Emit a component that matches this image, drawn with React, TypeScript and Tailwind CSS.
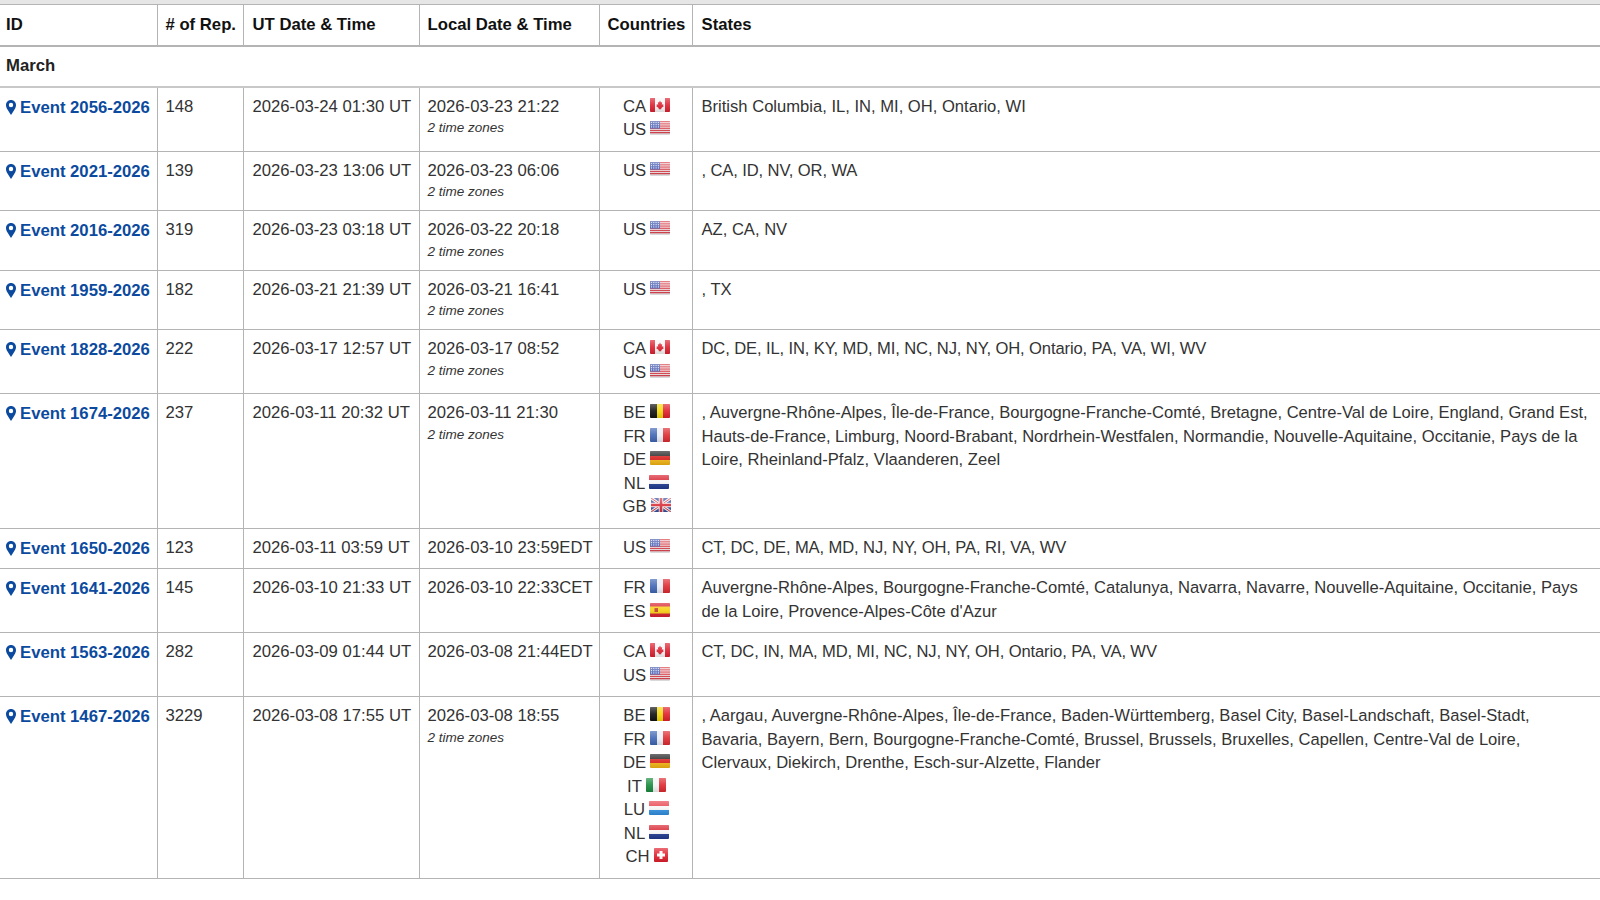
import React, { useId } from "react";

type Code = "CA" | "US" | "BE" | "FR" | "DE" | "NL" | "GB" | "IT" | "LU" | "CH" | "ES";

function Flag({ code }: { code: Code }) {
  const id = useId();
  const w = code === "CH" ? 14 : 20;
  let body: React.ReactNode = null;
  const v = (a: string, b: string, c: string) => (
    <>
      <rect x="0" y="0" width="7" height="14" fill={a} />
      <rect x="7" y="0" width="6" height="14" fill={b} />
      <rect x="13" y="0" width="7" height="14" fill={c} />
    </>
  );
  const h = (a: string, b: string, c: string) => (
    <>
      <rect x="0" y="0" width="20" height="5" fill={a} />
      <rect x="0" y="5" width="20" height="4" fill={b} />
      <rect x="0" y="9" width="20" height="5" fill={c} />
    </>
  );
  if (code === "BE") body = v("#111111", "#f5d90a", "#e0202c");
  if (code === "FR") body = v("#3f66b4", "#eceef6", "#dd2a30");
  if (code === "IT") body = v("#178a3c", "#f4f4f4", "#dd2a30");
  if (code === "DE") body = h("#222222", "#d8201c", "#f3b512");
  if (code === "NL") body = h("#d8202c", "#f6f6f6", "#1f3a8f");
  if (code === "LU") body = h("#e8404a", "#f6f6f6", "#2f8fe0");
  if (code === "CA")
    body = (
      <>
        <rect width="20" height="14" fill="#f6f6f6" />
        <rect width="5" height="14" fill="#dd2030" />
        <rect x="15" width="5" height="14" fill="#dd2030" />
        <path d="M10 2.5l1 2 1.2-.4-.4 2.6 1.6-.6-.4 1.4 1 .5-2.6 2-.2 1.2h-2.4l-.2-1.2-2.6-2 1-.5-.4-1.4 1.6.6-.4-2.6 1.2.4z" fill="#dd2030" />
      </>
    );
  if (code === "US")
    body = (
      <>
        <rect width="20" height="14" fill="#f4f4f6" />
        {[0, 2.2, 4.4, 6.6, 8.8, 11].map((y) => (
          <rect key={y} y={y} width="20" height="1.3" fill="#d8404a" />
        ))}
        <rect width="10" height="7.6" fill="#4a5fb0" />
        {[1.5, 3.7, 5.9].map((y) =>
          [1.5, 3.8, 6.1, 8.4].map((x) => <circle key={`${x}-${y}`} cx={x} cy={y} r="0.6" fill="#eef" />)
        )}
      </>
    );
  if (code === "GB")
    body = (
      <>
        <rect width="20" height="14" fill="#3a4f9f" />
        <path d="M0 0L20 14M20 0L0 14" stroke="#f4f4f4" strokeWidth="3" />
        <path d="M0 0L20 14M20 0L0 14" stroke="#d8303a" strokeWidth="1" />
        <path d="M10 0V14M0 7H20" stroke="#f4f4f4" strokeWidth="4.5" />
        <path d="M10 0V14M0 7H20" stroke="#d8303a" strokeWidth="2.6" />
      </>
    );
  if (code === "ES")
    body = (
      <>
        <rect width="20" height="14" fill="#d8202c" />
        <rect y="3.5" width="20" height="7" fill="#f7cf10" />
        <rect x="4.5" y="5" width="3.5" height="4" fill="#c0401c" />
      </>
    );
  if (code === "CH")
    body = (
      <>
        <rect width="14" height="14" fill="#e01e2c" />
        <rect x="5.5" y="3" width="3" height="8" fill="#fff" />
        <rect x="3" y="5.5" width="8" height="3" fill="#fff" />
      </>
    );
  return (
    <svg
      width={w}
      height="14"
      viewBox={`0 0 ${w} 14`}
      className="inline-block align-[0px] ml-[4px] rounded-[1px]"
    >
      <defs>
        <linearGradient id={id} x1="0" y1="0" x2="0" y2="1">
          <stop offset="0" stopColor="#fff" stopOpacity="0.35" />
          <stop offset="0.5" stopColor="#fff" stopOpacity="0.1" />
          <stop offset="1" stopColor="#000" stopOpacity="0.12" />
        </linearGradient>
      </defs>
      {body}
      <rect width={w} height="14" fill={`url(#${id})`} />
    </svg>
  );
}

function Pin() {
  return (
    <svg width="10" height="15" viewBox="0 0 10 15" className="inline-block mr-[4px] align-[-2px]">
      <path
        fillRule="evenodd"
        d="M5 0C2.2 0 0 2.2 0 5c0 1.5.6 3 1.5 4.6C2.5 11.5 3.8 13.4 5 15c1.2-1.6 2.5-3.5 3.5-5.4C9.4 8 10 6.5 10 5c0-2.8-2.2-5-5-5zm0 2.8a2.2 2.2 0 110 4.4 2.2 2.2 0 010-4.4z"
        fill="#0b4a9e"
      />
    </svg>
  );
}

type Row = {
  id: string;
  rep: string;
  ut: string;
  local: string;
  tz: boolean;
  c: Code[];
  s: string;
  tight?: boolean;
};

const rows: Row[] = [
  { id: "Event 2056-2026", rep: "148", ut: "2026-03-24 01:30 UT", local: "2026-03-23 21:22", tz: true, c: ["CA", "US"], s: "British Columbia, IL, IN, MI, OH, Ontario, WI" },
  { id: "Event 2021-2026", rep: "139", ut: "2026-03-23 13:06 UT", local: "2026-03-23 06:06", tz: true, c: ["US"], s: ", CA, ID, NV, OR, WA", tight: true },
  { id: "Event 2016-2026", rep: "319", ut: "2026-03-23 03:18 UT", local: "2026-03-22 20:18", tz: true, c: ["US"], s: "AZ, CA, NV" },
  { id: "Event 1959-2026", rep: "182", ut: "2026-03-21 21:39 UT", local: "2026-03-21 16:41", tz: true, c: ["US"], s: ", TX" },
  { id: "Event 1828-2026", rep: "222", ut: "2026-03-17 12:57 UT", local: "2026-03-17 08:52", tz: true, c: ["CA", "US"], s: "DC, DE, IL, IN, KY, MD, MI, NC, NJ, NY, OH, Ontario, PA, VA, WI, WV", tight: true },
  { id: "Event 1674-2026", rep: "237", ut: "2026-03-11 20:32 UT", local: "2026-03-11 21:30", tz: true, c: ["BE", "FR", "DE", "NL", "GB"], s: ", Auvergne-Rhône-Alpes, Île-de-France, Bourgogne-Franche-Comté, Bretagne, Centre-Val de Loire, England, Grand Est, Hauts-de-France, Limburg, Noord-Brabant, Nordrhein-Westfalen, Normandie, Nouvelle-Aquitaine, Occitanie, Pays de la Loire, Rheinland-Pfalz, Vlaanderen, Zeel" },
  { id: "Event 1650-2026", rep: "123", ut: "2026-03-11 03:59 UT", local: "2026-03-10 23:59EDT", tz: false, c: ["US"], s: "CT, DC, DE, MA, MD, NJ, NY, OH, PA, RI, VA, WV", tight: true },
  { id: "Event 1641-2026", rep: "145", ut: "2026-03-10 21:33 UT", local: "2026-03-10 22:33CET", tz: false, c: ["FR", "ES"], s: "Auvergne-Rhône-Alpes, Bourgogne-Franche-Comté, Catalunya, Navarra, Navarre, Nouvelle-Aquitaine, Occitanie, Pays de la Loire, Provence-Alpes-Côte d'Azur" },
  { id: "Event 1563-2026", rep: "282", ut: "2026-03-09 01:44 UT", local: "2026-03-08 21:44EDT", tz: false, c: ["CA", "US"], s: "CT, DC, IN, MA, MD, MI, NC, NJ, NY, OH, Ontario, PA, VA, WV", tight: true },
  { id: "Event 1467-2026", rep: "3229", ut: "2026-03-08 17:55 UT", local: "2026-03-08 18:55", tz: true, c: ["BE", "FR", "DE", "IT", "LU", "NL", "CH"], s: ", Aargau, Auvergne-Rhône-Alpes, Île-de-France, Baden-Württemberg, Basel City, Basel-Landschaft, Basel-Stadt, Bavaria, Bayern, Bern, Bourgogne-Franche-Comté, Brussel, Brussels, Bruxelles, Capellen, Centre-Val de Loire, Clervaux, Diekirch, Drenthe, Esch-sur-Alzette, Flander" },
];

const th = "border-l border-[#b4b4b4] px-2 py-0 text-left font-bold text-[#111] align-middle whitespace-nowrap";
const td = "border-l border-[#b4b4b4] px-2 pt-[7px] pb-[9px] align-top";

export default function App() {
  return (
    <div className="w-[1600px] h-[900px] bg-white overflow-hidden font-['Liberation_Sans',Arial,sans-serif] text-[16.7px] leading-[23.5px] text-[#333]">
      <div className="h-1 bg-[#e6e6e6]" />
      <table className="w-[1600px] table-fixed border-t border-[#b4b4b4]">
        <colgroup>
          <col className="w-[157px]" />
          <col className="w-[86px]" />
          <col className="w-[176px]" />
          <col className="w-[180px]" />
          <col className="w-[93px]" />
          <col />
        </colgroup>
        <thead>
          <tr className="h-[41px] border-b-2 border-[#b4b4b4]">
            <th className="px-[6px] text-left font-bold text-[#111] align-middle">ID</th>
            <th className={th}># of Rep.</th>
            <th className={`${th} pl-[9px]`}>UT Date &amp; Time</th>
            <th className={th}>Local Date &amp; Time</th>
            <th className={th}>Countries</th>
            <th className={`${th} pl-[9px]`}>States</th>
          </tr>
        </thead>
        <tbody>
          <tr className="h-[41px] border-b-2 border-[#c8c8c8]">
            <td colSpan={6} className="px-[6px] font-bold text-[#222] align-middle">
              March
            </td>
          </tr>
          {rows.map((r) => (
            <tr key={r.id} className="border-b border-[#b4b4b4]">
              <td className="px-[6px] pt-2 pb-2 align-top whitespace-nowrap">
                <a className="font-bold text-[#0b4a9e]">
                  <Pin />
                  {r.id}
                </a>
              </td>
              <td className={td}>{r.rep}</td>
              <td className={`${td} pl-[9px] whitespace-nowrap`}>{r.ut}</td>
              <td className={`${td} whitespace-nowrap`}>
                <div>{r.local}</div>
                {r.tz && <div className="text-[13.5px] italic leading-[19px]">2 time zones</div>}
              </td>
              <td className={`${td} pl-[9px] pr-[7px] text-center`}>
                {r.c.map((c) => (
                  <div key={c} className="whitespace-nowrap">
                    {c}
                    <Flag code={c} />
                  </div>
                ))}
              </td>
              <td className={`${td} pl-[9px] pr-[7px] text-[16.58px] ${r.tight ? "tracking-[-0.12px]" : ""}`}>{r.s}</td>
            </tr>
          ))}
        </tbody>
      </table>
    </div>
  );
}
